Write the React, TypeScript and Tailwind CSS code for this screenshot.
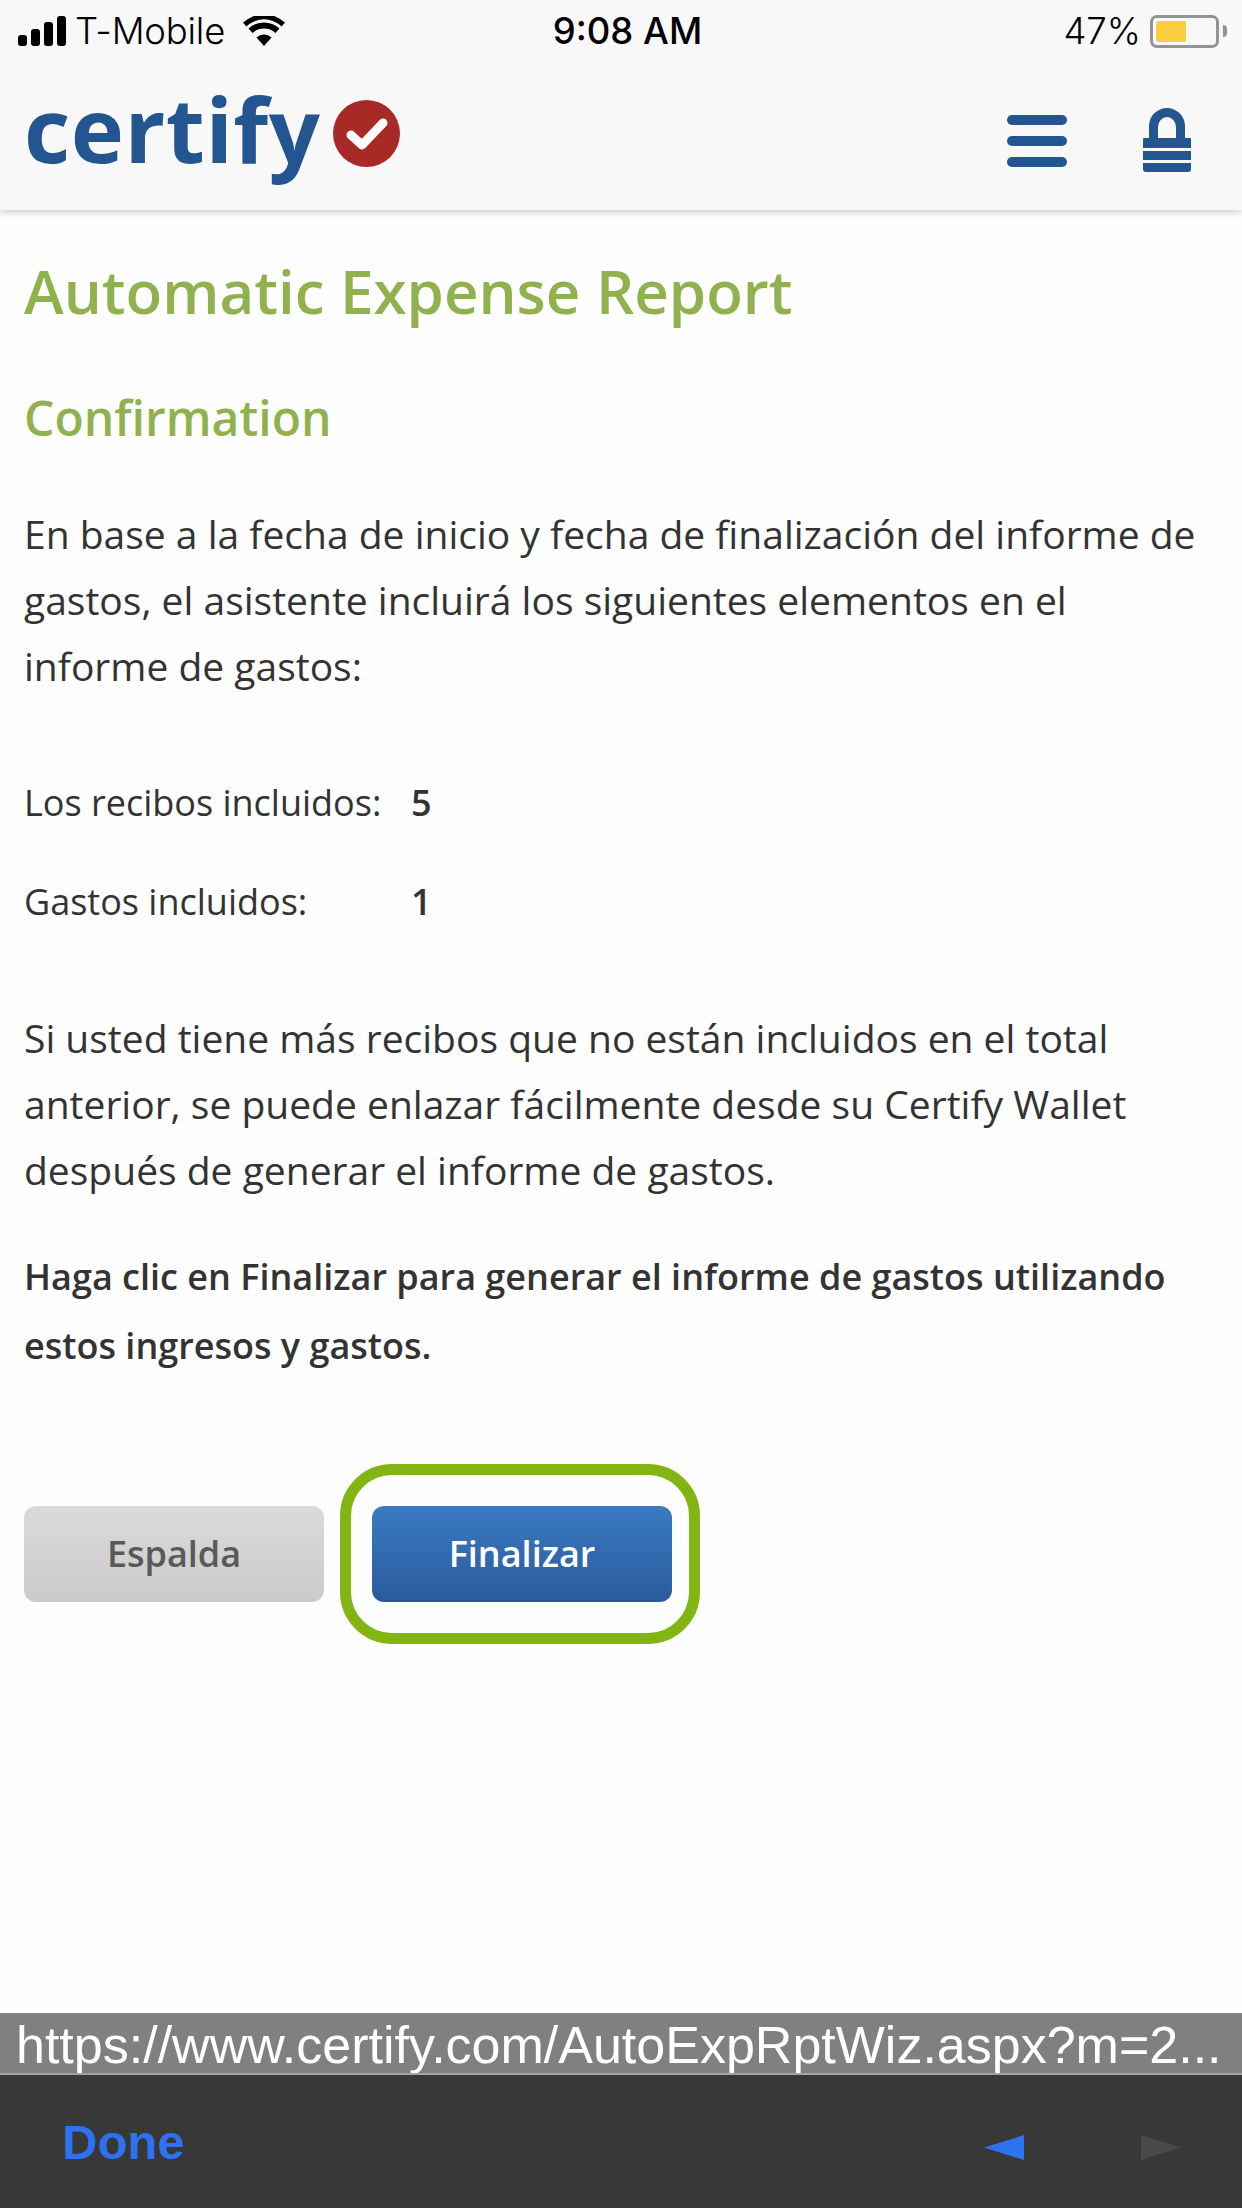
const body = { fontFamily: '"Open Sans", sans-serif' };

function Wifi() {
  return (
    <svg width="42" height="30" viewBox="0 0 42 30" className="ml-[18px]">
      <path d="M21 30 L13.5 21.5 A11 11 0 0 1 28.5 21.5 Z" fill="#000" />
      <path d="M9.5 17 L5.5 12.6 A22.5 22.5 0 0 1 36.5 12.6 L32.5 17 A17 17 0 0 0 9.5 17 Z" fill="#000" />
      <path d="M3.5 10.5 L0 6.8 A30 30 0 0 1 42 6.8 L38.5 10.5 A25 25 0 0 0 3.5 10.5 Z" fill="#000" />
    </svg>
  );
}

function Lock() {
  return (
    <svg width="48" height="64" viewBox="0 0 48 64" className="block">
      <path d="M6 30 V18 A18 18 0 0 1 42 18 V30 H33 V19 A9 10 0 0 0 15 19 V30 Z" fill="#235590" />
      <path d="M1 30 H47 Q48 30 48 31 V40 H0 V31 Q0 30 1 30 Z M0 43 H48 V52 H0 Z M0 55 H48 V61 Q48 64 45 64 H3 Q0 64 0 61 Z" fill="#235590" />
    </svg>
  );
}

export default function App() {
  return (
    <div className="w-[1242px] h-[2208px] flex flex-col bg-[#fefefe] text-[#333]" style={body}>
      <header className="h-[210px] bg-[#f8f8f8] shadow-[0_2px_8px_rgba(0,0,0,0.22)] relative z-10 shrink-0 flex flex-col">
        <div className="h-[62px] pl-[18px] pr-[15px] flex items-center justify-between text-black text-[36.5px] font-['Inter',sans-serif]">
          <div className="flex items-center w-[405px]">
            <div className="flex items-end gap-[4px] h-[30px]">
              <span className="w-[9px] h-[11px] rounded-[3px] bg-black" />
              <span className="w-[9px] h-[17px] rounded-[3px] bg-black" />
              <span className="w-[9px] h-[24px] rounded-[3px] bg-black" />
              <span className="w-[9px] h-[30px] rounded-[3px] bg-black" />
            </div>
            <span className="ml-[9px] font-light tracking-[-0.2px]">T-Mobile</span>
            <Wifi />
          </div>
          <span className="font-medium">9:08 AM</span>
          <div className="w-[395px] flex items-center justify-end">
            <span className="font-light mr-[9px]">47%</span>
            <div className="w-[69px] h-[33px] rounded-[7px] border-[3px] border-[#939393] p-[3px]">
              <div className="w-[30px] h-full bg-[#fbcf3f] rounded-l-[3px]" />
            </div>
            <div className="w-[4px] h-[12px] ml-[4px] rounded-r-full bg-[#939393]" />
          </div>
        </div>
        <div className="flex-1 flex items-start justify-between pl-[24px] pr-[51px]">
          <div className="flex items-start mt-[14px]">
            <span className="text-[#235590] font-bold text-[90px] leading-[104px] tracking-[0.5px]">certify</span>
            <div className="ml-[13px] mt-[24px] w-[67px] h-[67px] rounded-full bg-[#a82a27] flex items-center justify-center">
              <svg width="44" height="36" viewBox="0 0 44 36">
                <path d="M6 19 L17 29 L38 7" fill="none" stroke="#fff" strokeWidth="9" strokeLinecap="round" strokeLinejoin="round" />
              </svg>
            </div>
          </div>
          <div className="flex items-start mt-[46px]">
            <div className="flex flex-col gap-[11px] mt-[7px]">
              <span className="w-[60px] h-[10px] rounded-full bg-[#235590]" />
              <span className="w-[60px] h-[10px] rounded-full bg-[#235590]" />
              <span className="w-[60px] h-[10px] rounded-full bg-[#235590]" />
            </div>
            <div className="ml-[76px]">
              <Lock />
            </div>
          </div>
        </div>
      </header>

      <main className="flex-1 px-[24px] pt-[41px] min-h-0">
        <h1 className="text-[60px] leading-[80px] font-semibold text-[#90b24e]">Automatic Expense Report</h1>
        <h2 className="mt-[57px] text-[48px] leading-[60px] font-semibold text-[#90b24e]">Confirmation</h2>

        <p className="mt-[53px] text-[39px] leading-[66px]">
          En base a la fecha de inicio y fecha de finalización del informe de gastos, el asistente incluirá los siguientes elementos en el informe de gastos:
        </p>

        <div className="mt-[71px] text-[36px] leading-[66px] flex flex-col gap-[33px]">
          <div className="flex">
            <span className="w-[387px]">Los recibos incluidos:</span>
            <span className="font-semibold">5</span>
          </div>
          <div className="flex">
            <span className="w-[387px]">Gastos incluidos:</span>
            <span className="font-semibold">1</span>
          </div>
        </div>

        <p className="mt-[70px] text-[39px] leading-[66px]">
          Si usted tiene más recibos que no están incluidos en el total anterior, se puede enlazar fácilmente desde su Certify Wallet después de generar el informe de gastos.
        </p>

        <p className="mt-[39px] text-[36px] leading-[69px] font-semibold">
          Haga clic en Finalizar para generar el informe de gastos utilizando estos ingresos y gastos.
        </p>

        <div className="mt-[84px] flex items-center">
          <button className="w-[300px] h-[96px] rounded-[12px] bg-gradient-to-b from-[#dadada] to-[#cbcbcb] text-[36px] font-semibold text-[#595959]">
            Espalda
          </button>
          <div className="ml-[16px] w-[360px] h-[180px] rounded-[52px] border-[11px] border-[#82b512] flex items-center pl-[21px]">
            <button className="w-[300px] h-[96px] rounded-[12px] bg-gradient-to-b from-[#3a7bc2] to-[#2a5a9c] text-[36px] font-semibold text-white">
              Finalizar
            </button>
          </div>
        </div>
      </main>

      <div className="h-[62px] shrink-0 bg-[#808080] border-b-[2px] border-[#a3a3a3] pl-[16px] text-white text-[52px] leading-[64px] whitespace-nowrap overflow-hidden font-['Liberation_Sans',sans-serif]">
        https://www.certify.com/AutoExpRptWiz.aspx?m=2...
      </div>
      <div className="h-[133px] shrink-0 bg-[#383838] flex items-center justify-between pl-[62px] pr-[61px] font-['Liberation_Sans',sans-serif]">
        <span className="text-[#2d72f0] text-[49px] font-bold leading-[56px]">Done</span>
        <div className="flex items-center gap-[117px] mt-[12px]">
          <svg width="40" height="25" viewBox="0 0 40 25"><path d="M0 12.5 L40 0 V25 Z" fill="#2d72f0" /></svg>
          <svg width="40" height="25" viewBox="0 0 40 25"><path d="M40 12.5 L0 0 V25 Z" fill="#4a4a4a" /></svg>
        </div>
      </div>
    </div>
  );
}
